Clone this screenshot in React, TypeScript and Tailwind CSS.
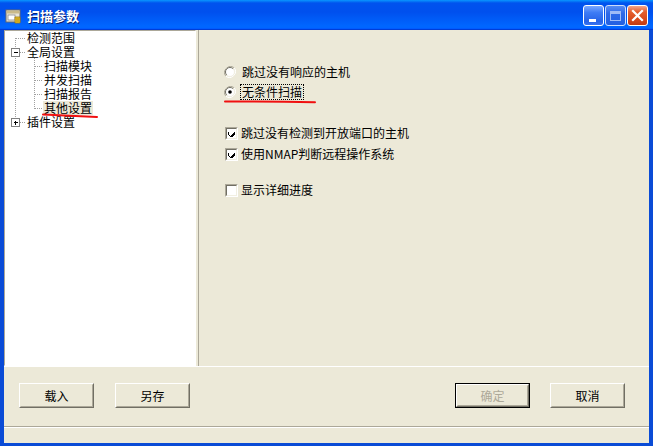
import React from "react";

const FONT = "font-['SimSun','Noto_Sans_CJK_SC',sans-serif]";

function TitleIcon() {
  return (
    <svg width="17" height="17" viewBox="0 0 17 17" className="shrink-0">
      <rect x="1" y="3" width="14" height="12" fill="#E8E4D8" stroke="#6B6B6B" />
      <rect x="1.5" y="3.5" width="13" height="3" fill="#C9B98A" />
      <rect x="3" y="8" width="7" height="5" fill="#FFFFFF" stroke="#8C8C8C" strokeWidth="0.8" />
      <path d="M10 10 L15 10 L15 16 L10 16 Z" fill="#F2C92B" stroke="#9C7A10" strokeWidth="0.8" />
      <path d="M11 12 L14 12 M11 14 L14 14" stroke="#9C7A10" strokeWidth="0.8" />
    </svg>
  );
}

function TitleButton({ kind }: { kind: "min" | "max" | "close" }) {
  const bg =
    kind === "close"
      ? "bg-[linear-gradient(180deg,#F3A58A_0%,#E5602F_30%,#D84A1C_70%,#C23A12_100%)]"
      : kind === "max"
      ? "bg-[linear-gradient(180deg,#6B9AF5_0%,#3A6FE6_40%,#2C5FDB_100%)] opacity-80"
      : "bg-[linear-gradient(180deg,#7AA7FF_0%,#3D7BF5_35%,#2763E8_80%,#3A74F0_100%)]";
  return (
    <div
      className={`w-[21px] h-[21px] rounded-[3px] border border-white ${bg} flex items-center justify-center relative`}
    >
      {kind === "min" && <div className="absolute left-[5px] top-[13px] w-[7px] h-[3px] bg-white" />}
      {kind === "max" && (
        <div className="w-[11px] h-[10px] border border-[#C8D6F8] border-t-[3px]" />
      )}
      {kind === "close" && (
        <svg width="13" height="13" viewBox="0 0 13 13">
          <path d="M2 2 L11 11 M11 2 L2 11" stroke="white" strokeWidth="2.2" strokeLinecap="square" />
        </svg>
      )}
    </div>
  );
}

function TitleBar() {
  return (
    <div className="h-[30px] shrink-0 flex items-center bg-[linear-gradient(180deg,#0997FF_0%,#0053EE_10%,#0050EE_40%,#0066FF_86%,#0066FF_92%,#005BFF_95%,#003DD7_97%,#003DD7_100%)]">
      <div className="ml-[5px] mt-[1px]">
        <TitleIcon />
      </div>
      <div className="ml-[5px] text-white text-[13px] font-bold leading-none tracking-[0px] font-['Noto_Sans_CJK_SC',sans-serif] [text-shadow:1px_1px_0_#0A1F70]">
        扫描参数
      </div>
      <div className="ml-auto mr-[5px] mt-[1px] flex gap-[1px]">
        <TitleButton kind="min" />
        <TitleButton kind="max" />
        <TitleButton kind="close" />
      </div>
    </div>
  );
}

const treeRows: { text: string; level: number; selected?: boolean }[] = [
  { text: "检测范围", level: 0 },
  { text: "全局设置", level: 0 },
  { text: "扫描模块", level: 1 },
  { text: "并发扫描", level: 1 },
  { text: "扫描报告", level: 1 },
  { text: "其他设置", level: 1, selected: true },
  { text: "插件设置", level: 0 },
];

function Tree() {
  return (
    <div className="w-[192px] h-[336px] shrink-0 bg-white border-t border-l border-[#ACA899] border-r border-r-white border-b border-b-white relative">
      <svg className="absolute left-0 top-0" width="190" height="110">
        <g stroke="#A0A0A0" strokeWidth="1" strokeDasharray="1 1" shapeRendering="crispEdges">
          <path d="M10.5 7 L10.5 92" />
          <path d="M11 7.5 L20 7.5" />
          <path d="M11 21.5 L20 21.5" />
          <path d="M11 91.5 L20 91.5" />
          <path d="M29.5 27 L29.5 78" />
          <path d="M30 35.5 L38 35.5" />
          <path d="M30 49.5 L38 49.5" />
          <path d="M30 63.5 L38 63.5" />
          <path d="M30 77.5 L38 77.5" />
        </g>
        <g shapeRendering="crispEdges">
          <rect x="6.5" y="17.5" width="8" height="8" fill="white" stroke="#808080" />
          <path d="M8.5 21.5 L13 21.5" stroke="black" />
          <rect x="6.5" y="87.5" width="8" height="8" fill="white" stroke="#808080" />
          <path d="M8.5 91.5 L13 91.5 M10.5 89.5 L10.5 94" stroke="black" />
        </g>
      </svg>
      <div className="flex flex-col relative">
        {treeRows.map((r) => (
          <div key={r.text} className="h-[14px] flex items-center">
            <div
              className={`${r.level === 0 ? "ml-[21px]" : "ml-[38px]"} h-[14px] px-[1px] flex items-center text-[12px] leading-none text-black ${
                r.selected ? "bg-[#ECE9D8]" : ""
              }`}
            >
              {r.text}
            </div>
          </div>
        ))}
      </div>
    </div>
  );
}

function Radio({ checked }: { checked?: boolean }) {
  return (
    <svg width="12" height="12" viewBox="0 0 12 12" className="shrink-0">
      <path d="M10.2 1.8 A6 6 0 0 0 1.8 10.2" fill="none" stroke="#ACA899" strokeWidth="1" />
      <path d="M1.8 10.2 A6 6 0 0 0 10.2 1.8" fill="none" stroke="#FFFFFF" strokeWidth="1" />
      <circle cx="6" cy="6" r="4.6" fill="white" />
      <path d="M9.2 2.8 A4.5 4.5 0 0 0 2.8 9.2" fill="none" stroke="#716F64" strokeWidth="1" />
      <path d="M2.8 9.2 A4.5 4.5 0 0 0 9.2 2.8" fill="none" stroke="#F1EFE2" strokeWidth="1" />
      {checked && <circle cx="6" cy="6" r="1.8" fill="black" />}
    </svg>
  );
}

function Check({ checked }: { checked?: boolean }) {
  return (
    <div className="w-[13px] h-[13px] shrink-0 border border-t-[#ACA899] border-l-[#ACA899] border-r-white border-b-white">
      <div className="w-full h-full bg-white border border-t-[#716F64] border-l-[#716F64] border-r-[#F1EFE2] border-b-[#F1EFE2] flex items-center justify-center">
        {checked && (
          <svg width="7" height="7" viewBox="0 0 7 7" shapeRendering="crispEdges">
            <path d="M0 2h1v3h1v1h1v-1h1v-1h1v-1h1v-1h1v3h-1v1h-1v1h-1v1h-1v-1h-1v-1h-1v-1h-1z" fill="black" />
          </svg>
        )}
      </div>
    </div>
  );
}

function RightPanel() {
  return (
    <div className="flex-1 flex flex-col pl-[24px] pt-[34px] text-[12px] leading-none text-black">
      <div className="h-[16px] flex items-center">
        <div className="ml-[1px]">
          <Radio />
        </div>
        <span className="ml-[6px]">跳过没有响应的主机</span>
      </div>
      <div className="h-[16px] mt-[4px] flex items-center">
        <div className="ml-[1px]">
          <Radio checked />
        </div>
        <span className="ml-[4px] px-[1px] py-[1px] border border-dotted border-black">无条件扫描</span>
      </div>
      <div className="h-[16px] mt-[25px] flex items-center">
        <div className="ml-[2px]">
          <Check checked />
        </div>
        <span className="ml-[3px]">跳过没有检测到开放端口的主机</span>
      </div>
      <div className="h-[16px] mt-[5px] flex items-center">
        <div className="ml-[2px]">
          <Check checked />
        </div>
        <span className="ml-[3px]">使用NMAP判断远程操作系统</span>
      </div>
      <div className="h-[16px] mt-[20px] flex items-center">
        <div className="ml-[2px]">
          <Check />
        </div>
        <span className="ml-[3px]">显示详细进度</span>
      </div>
    </div>
  );
}

function Btn({ label, def, disabled, className = "" }: { label: string; def?: boolean; disabled?: boolean; className?: string }) {
  const inner = (
    <div className="w-full h-full border border-t-white border-l-white border-r-[#716F64] border-b-[#716F64]">
      <div
        className={`w-full h-full border border-t-[#ECE9D8] border-l-[#ECE9D8] border-r-[#ACA899] border-b-[#ACA899] flex items-center justify-center text-[12px] leading-none ${
          disabled ? "text-[#ACA899]" : "text-black"
        }`}
      >
        {label}
      </div>
    </div>
  );
  return (
    <div className={`w-[75px] h-[25px] ${def ? "border border-black" : ""} ${className}`}>{inner}</div>
  );
}

export default function App() {
  return (
    <div className={`w-[653px] h-[446px] bg-[#0A4BD6] flex flex-col relative overflow-hidden ${FONT}`}>
      <TitleBar />
      <div className="flex-1 ml-[4px] mr-[4px] mb-[3px] bg-[#ECE9D8] flex flex-col">
        <div className="h-[336px] flex shrink-0">
          <Tree />
          <div className="w-[3px] h-[336px] border-r border-[#ACA899]" />
          <RightPanel />
        </div>
        <div className="h-px bg-white shrink-0" />
        <div className="h-[59px] shrink-0 flex items-start pt-[16px] pl-[15px] pr-[24px]">
          <Btn label="载入" />
          <Btn label="另存" className="ml-[21px]" />
          <Btn label="确定" def disabled className="ml-auto" />
          <Btn label="取消" className="ml-[20px]" />
        </div>
        <div className="h-px bg-[#ACA899] shrink-0" />
        <div className="h-px bg-white shrink-0" />
        <div className="flex-1" />
      </div>
      <svg className="absolute left-0 top-0 pointer-events-none" width="653" height="446">
        <path d="M43 114.5 Q70 115.5 97 117" stroke="#F01010" strokeWidth="2" fill="none" strokeLinecap="round" />
        <path d="M225 101.5 Q270 101.5 315 102.3" stroke="#F01010" strokeWidth="2" fill="none" strokeLinecap="round" />
      </svg>
    </div>
  );
}
